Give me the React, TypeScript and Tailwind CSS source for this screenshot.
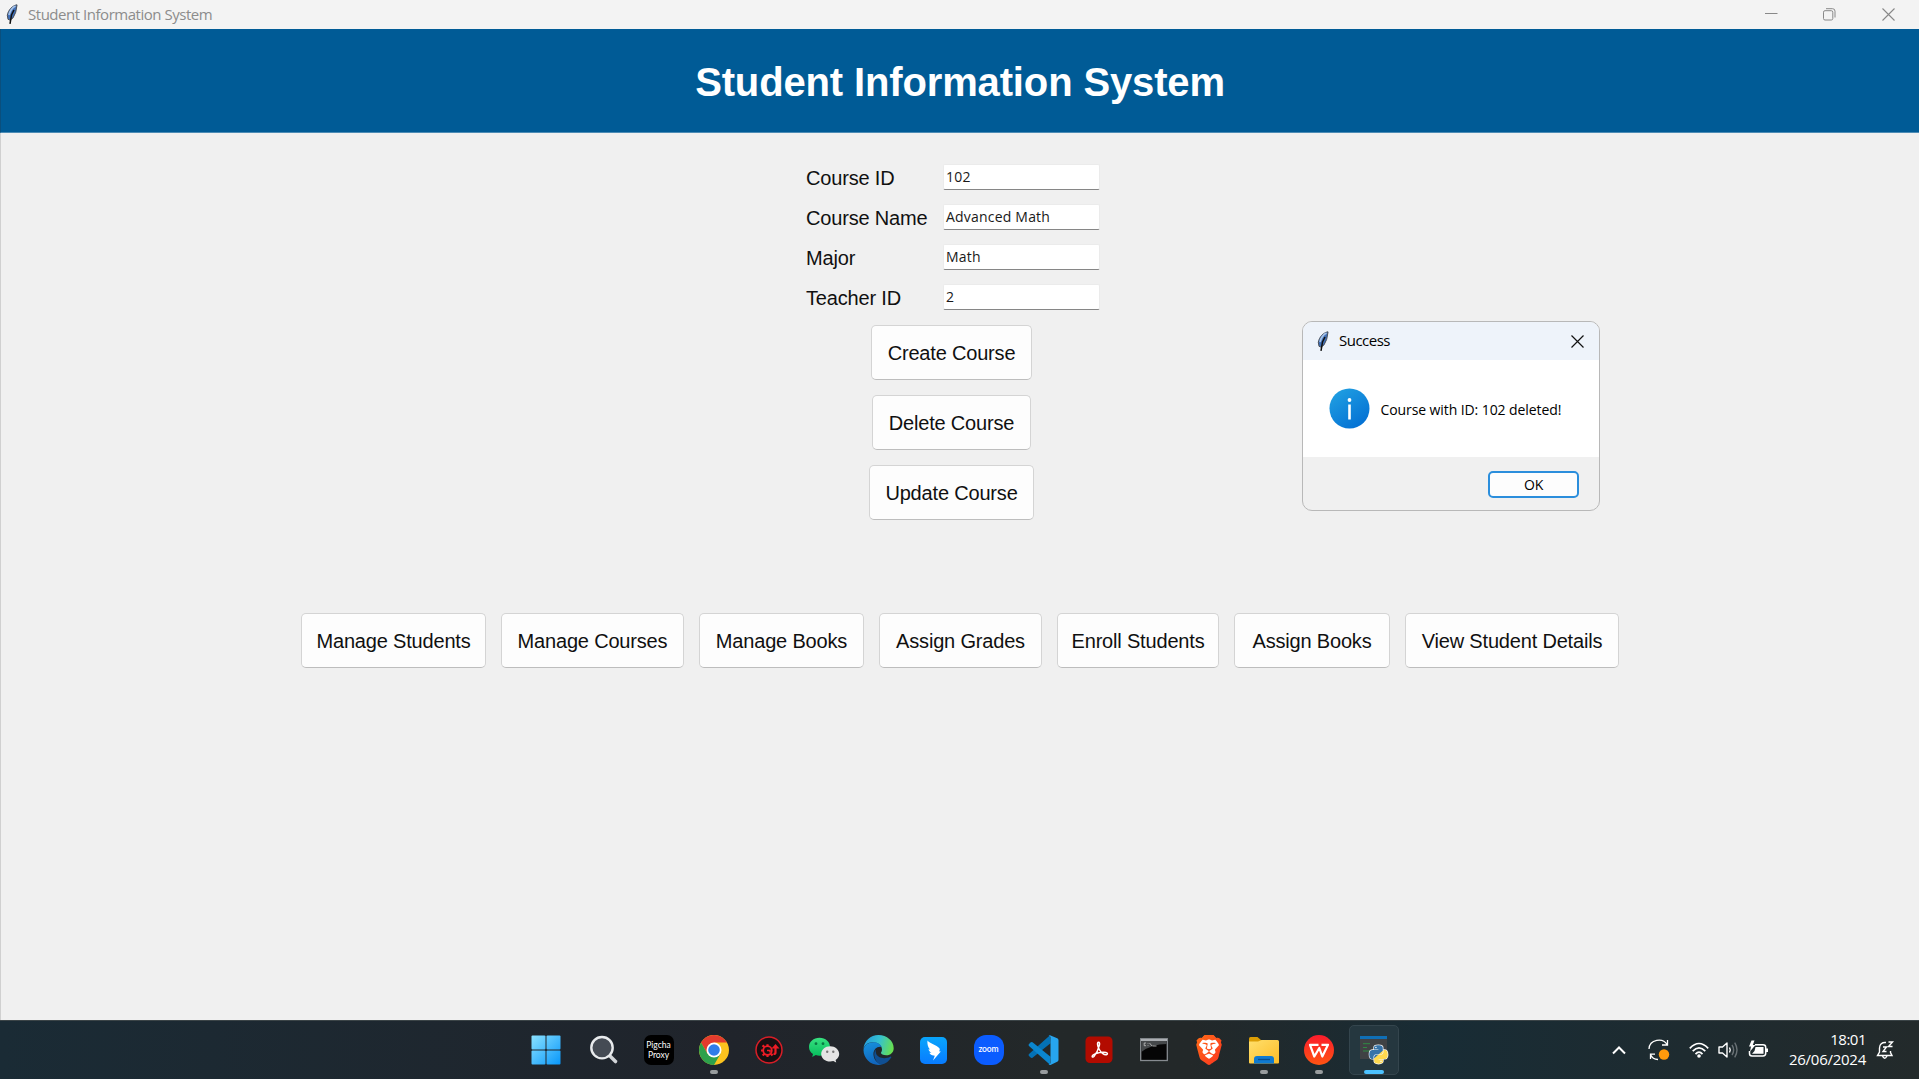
import React from "react";
import { SiBrave } from "react-icons/si";
import { FaPython } from "react-icons/fa";

const segoe = "font-['Open_Sans','Noto_Sans',sans-serif]";
const arial = "font-['Liberation_Sans',Arial,sans-serif]";

function Feather() {
  return (
    <svg width="13" height="21" viewBox="0 0 13 21" className="block shrink-0">
      <path d="M11 .8C6.500 1.500 2.200 6 1.300 11.200L2 15.300l2 .8 3-2.200 2.700-5.600L11 1.200Z" fill="#3f6fb8" stroke="#4a4f57" strokeWidth="1" />
      <path d="M9.500 2C6.500 3.500 4 7 3 11" stroke="#a5c2e8" strokeWidth="1.800" fill="none" />
      <path d="M8 6 5.500 11 4 19.800" stroke="#111" strokeWidth="1.500" fill="none" />
    </svg>
  );
}

function TitleBar() {
  return (
    <div className={`flex h-[29px] shrink-0 items-center bg-[#f3f3f3] pl-[6px] pr-[1px] text-[#8c8c8c] ${segoe}`}>
      <Feather />
      <span className="mb-[2px] ml-[9px] text-[15px] leading-[20px] tracking-[-0.47px]">Student Information System</span>
      <div className="ml-auto flex items-center">
        <div className="flex w-[58px] justify-center">
          <svg width="13" height="13" viewBox="0 0 13 13"><path d="M0 5.500H12.500" stroke="#888" strokeWidth="1" /></svg>
        </div>
        <div className="flex w-[58px] justify-center">
          <svg width="13" height="13" viewBox="0 0 13 13" fill="none" stroke="#888">
            <rect x=".5" y="2.700" width="9.300" height="9.300" rx="1.500" />
            <path d="M3 .7H9.500Q12 .7 12 3.200V9.500" />
          </svg>
        </div>
        <div className="flex w-[60px] justify-center">
          <svg width="13" height="13" viewBox="0 0 13 13"><path d="M.5 .5 12.500 12.500M12.500 .5.5 12.500" stroke="#888" strokeWidth="1.100" /></svg>
        </div>
      </div>
    </div>
  );
}

const fields = [
  ["Course ID", "102"],
  ["Course Name", "Advanced Math"],
  ["Major", "Math"],
  ["Teacher ID", "2"],
];

function Button({ label, width }: { label: string; width: string }) {
  return (
    <button className={`${width} h-[55px] shrink-0 whitespace-nowrap rounded-[5px] border border-[#d4d4d4] border-b-[#bdbdbd] bg-[#fdfdfd] text-[20px] leading-[24px] tracking-[-0.18px] text-[#101010] ${arial}`}>
      {label}
    </button>
  );
}

function Dialog() {
  return (
    <div className={`absolute left-[1302px] top-[321px] flex h-[190px] w-[298px] flex-col overflow-hidden rounded-[10px] border border-[#b8b8b8] bg-[#f0f0f0] text-black ${segoe}`}>
      <div className="flex h-[38px] shrink-0 items-center bg-[#eef3fa] pl-[14px] pr-[15px]">
        <Feather />
        <span className="mb-[2px] ml-[9px] text-[15px] leading-[20px] tracking-[-0.5px]">Success</span>
        <svg className="ml-auto" width="13" height="13" viewBox="0 0 13 13"><path d="M.5 .5 12.500 12.500M12.500 .5.5 12.500" stroke="#111" strokeWidth="1.200" /></svg>
      </div>
      <div className="flex h-[97px] shrink-0 items-center bg-white pl-[25.500px]">
        <svg width="41" height="41" viewBox="0 0 41 41" className="shrink-0">
          <defs>
            <linearGradient id="info" x1="0" y1="0" x2=".7" y2="1"><stop stopColor="#23a4e3" /><stop offset="1" stopColor="#0471d4" /></linearGradient>
          </defs>
          <circle cx="20.500" cy="20.500" r="20" fill="url(#info)" />
          <circle cx="20.500" cy="12" r="1.900" fill="#fff" />
          <path d="M20.500 16.500V31.500" stroke="#fff" strokeWidth="2.600" />
        </svg>
        <span className="ml-[11px] mt-[2px] whitespace-nowrap text-[14px] leading-[20px] tracking-[-0.09px]">Course with ID: 102 deleted!</span>
      </div>
      <div className="flex flex-1 items-center justify-end pr-[20px] pt-[2px]">
        <button className="h-[27px] w-[91px] rounded-[5px] border-2 border-[#2b8edc] bg-[#fdfdfd] text-[14px] leading-[20px] tracking-[-0.3px]">OK</button>
      </div>
    </div>
  );
}

function WindowsIcon() {
  return (
    <svg width="30" height="30" viewBox="0 0 30 30">
      <defs>
        <linearGradient id="win" x1="0" y1="0" x2="29" y2="29" gradientUnits="userSpaceOnUse"><stop stopColor="#8de3ff" /><stop offset="1" stopColor="#0a98fa" /></linearGradient>
      </defs>
      <g fill="url(#win)">
        <rect x=".5" y=".5" width="14" height="14" rx="1" /><rect x="15.500" y=".5" width="14" height="14" rx="1" />
        <rect x=".5" y="15.500" width="14" height="14" rx="1" /><rect x="15.500" y="15.500" width="14" height="14" rx="1" />
      </g>
    </svg>
  );
}

function SearchIcon() {
  return (
    <svg width="30" height="30" viewBox="0 0 30 30">
      <path d="M20 20 26.500 26.500" stroke="#d3d6d9" strokeWidth="3.600" strokeLinecap="round" />
      <circle cx="13" cy="12.700" r="10.700" fill="#454b54" stroke="#e9ebed" strokeWidth="2.400" />
    </svg>
  );
}

function PigchaIcon() {
  return (
    <div className="flex h-[30px] w-[30px] flex-col items-center justify-center rounded-[7px] bg-black font-['Lato','Open_Sans',sans-serif] text-[8.500px] leading-[10px] text-white">
      <span>Pigcha</span>
      <span>Proxy</span>
    </div>
  );
}

function ChromeIcon() {
  return (
    <svg width="30" height="30" viewBox="0 0 30 30">
      <circle cx="15" cy="15" r="15" fill="#fcc31e" />
      <path d="M15 7.500H27.990A15 15 0 0 0 2.010 7.500L8.500 18.750Z" fill="#e33b2e" />
      <path d="M2.010 7.500A15 15 0 0 0 15 30L21.500 18.750 15 15 8.500 18.750Z" fill="#2da14c" />
      <circle cx="15" cy="15" r="7.500" fill="#fff" />
      <circle cx="15" cy="15" r="5.800" fill="#2f7de9" />
    </svg>
  );
}

function GearIcon() {
  return (
    <svg width="30" height="30" viewBox="0 0 30 30" fill="none">
      <circle cx="15" cy="15" r="13" fill="#171012" stroke="#d81e27" strokeWidth="1.500" />
      <circle cx="13.500" cy="15.500" r="4.300" stroke="#ee1c25" strokeWidth="1.800" />
      <g stroke="#ee1c25" strokeWidth="2.200">
        <path d="M10.500 12 8.500 10.300M9 15.500H7M10.500 18.700 8.700 20.500M13.500 19.500V22M17 18.700 18.500 20.500M13.500 11.500V9.300" />
        <path d="M21.500 12.500V17.500Q21.500 19 19.500 19" />
      </g>
      <path d="M13 15.500H16V17.500" stroke="#ee1c25" strokeWidth="1.500" />
      <path d="M17.500 13.500 21.500 9 25.500 13.500Z" fill="#ee1c25" />
    </svg>
  );
}

function WeChatIcon() {
  return (
    <svg width="32" height="30" viewBox="0 0 32 30">
      <defs><linearGradient id="wc" x1="0" y1="0" x2="0" y2="1"><stop stopColor="#38e080" /><stop offset="1" stopColor="#05bd5c" /></linearGradient></defs>
      <path d="M11.500 2.800C5.500 2.800 1 6.800 1 11.900c0 3 1.500 5.400 4 7L4.200 22l3.600-1.900c1.200.4 2.400.6 3.700.6C17.500 20.700 22 16.800 22 11.900S17.500 2.800 11.500 2.800Z" fill="url(#wc)" />
      <circle cx="8" cy="8.700" r="1.400" fill="#087a43" /><circle cx="15" cy="8.700" r="1.400" fill="#087a43" />
      <path d="M22.200 11.300c-5 0-9 3.400-9 7.700s4 7.600 9 7.600c1.100 0 2.100-.2 3.100-.5l2.900 1.500-.6-2.700c2.300-1.400 3.600-3.500 3.600-5.900 0-4.300-4-7.700-9-7.700Z" fill="#e4e4e4" />
      <circle cx="19.200" cy="16.700" r="1.200" fill="#777" /><circle cx="25.300" cy="16.700" r="1.200" fill="#777" />
    </svg>
  );
}

function EdgeIcon() {
  return (
    <svg width="31" height="30" viewBox="0 0 31 30">
      <defs>
        <linearGradient id="eg" x1="0" y1=".3" x2="1" y2=".5"><stop stopColor="#249bdc" /><stop offset=".5" stopColor="#35c1d0" /><stop offset="1" stopColor="#68e04e" /></linearGradient>
        <linearGradient id="eb" x1="0" y1="0" x2=".3" y2="1"><stop stopColor="#1693df" /><stop offset="1" stopColor="#1166bd" /></linearGradient>
      </defs>
      <path d="M.5 14C1 6 7.500 0 15.500 0 24 0 30.700 6 30.700 13.200c0 4.300-3.200 7-7.300 7-3.400 0-5.400-1.200-5.400-2.300 0-.9 1-1.400 1-3.500C19 10 14.500 7.200 10 7.200 5 7.200 1.500 10 .5 14Z" fill="url(#eg)" />
      <path d="M.5 15C1 10 5.500 7.200 10 7.200c4.200 0 7.500 2 8.700 4.800-5-1-8.700 3-8.200 8 .5 5 4 8.500 8.500 9.500C9.500 31.800.5 24.500.5 15Z" fill="url(#eb)" />
      <path d="M12.500 14.500C8.500 21.500 15 30.500 19 29.500c4-.9 7.300-3.700 9.200-7 .5-.8-.3-1.200-1-.8-5.800 3-12.500 1-14-3-.5-1.500-.6-3-.7-4.200Z" fill="#104f92" />
    </svg>
  );
}

function BirdIcon() {
  return (
    <svg width="27" height="27" viewBox="0 0 27 27">
      <defs><linearGradient id="bd" x1="0" y1="0" x2="0" y2="1"><stop stopColor="#09a5fb" /><stop offset="1" stopColor="#087bff" /></linearGradient></defs>
      <rect width="27" height="27" rx="5" fill="url(#bd)" />
      <path d="M7.500 3.500C9.500 6 14.500 7.500 18 10c1.700 1.200 2.500 2.300 1 4.200l1.800.3L13 23.500l1.800-4.700-2.600-.6c-1.500-.4-2.300-1.200-2.800-2.400l2 .2c-1.500-.9-2.400-2.100-2.900-3.700l1.500.3C8 10.300 7 7 7.500 3.500Z" fill="#fff" />
    </svg>
  );
}

function ZoomIcon() {
  return (
    <div className="flex h-[30px] w-[30px] items-center justify-center rounded-[12px] bg-[#0b5cff] pb-[2px] font-['Lato',sans-serif] text-[8.500px] font-semibold leading-[10px] tracking-[-0.1px] text-white">
      zoom
    </div>
  );
}

function CodeIcon() {
  return (
    <svg width="31" height="30" viewBox="0 0 31 30">
      <path d="M22.500 8.300 4.500 22.700Q3.500 23.400 2.600 22.600L1 21Q0 20 1 19L22 .2Z" fill="#0471b5" />
      <path d="M22.500 21.700 4.500 7.300Q3.500 6.600 2.600 7.400L1 9Q0 10 1 11L22 29.800Z" fill="#0b86cf" />
      <path d="M22 .2 29.200 3.200Q30.500 3.800 30.500 5.200V24.800Q30.500 26.200 29.200 26.800L22.500 30Q21.300 29.900 20.500 29 22.500 29.500 22.500 27.500V2.500Q22.500.5 20.500 1Z" fill="#27a5ef" />
    </svg>
  );
}

function AcrobatIcon() {
  return (
    <svg width="28" height="28" viewBox="0 0 28 28">
      <rect x=".5" y=".5" width="27" height="26.500" rx="4.500" fill="#b30b00" />
      <path d="M13.500 6.300c-1.700 0-.9 4.200.8 7.200 1.500 2.800 4.800 5.600 7 5.200 2.300-.7.900-2.900-3.500-2.500-3.800.3-8 1.300-9.800 2.800-1.700 1.500-.6 3 .9 1.400 1.700-2 4.500-7.200 5.400-10.800.5-2 .3-3.300-.8-3.300Z" fill="none" stroke="#fff" strokeWidth="1.500" />
    </svg>
  );
}

function TerminalIcon() {
  return (
    <svg width="28" height="24" viewBox="0 0 28 24">
      <rect x=".7" y=".7" width="26.600" height="21.800" fill="#050505" stroke="#868b90" strokeWidth="1.300" />
      <path d="M1.300 2.500H26.700V6Q12 6 1.300 14Z" fill="#45484a" />
      <path d="M1 2H27" stroke="#b9bdc1" strokeWidth="1.800" />
      <path d="M6 5H4.200V7.700H6M8 5.200V5.800M8 7V7.700M9.500 5 12 8M12.500 8H16.500" stroke="#c4c4c4" strokeWidth=".8" fill="none" />
    </svg>
  );
}

function BraveIcon() {
  return (
    <div className="relative flex h-[30px] w-[30px] items-center justify-center">
      <svg width="28" height="30" viewBox="0 0 28 30">
        <defs><linearGradient id="br" x1="0" y1="0" x2="1" y2="1"><stop stopColor="#ff6b16" /><stop offset="1" stopColor="#fb3421" /></linearGradient></defs>
        <path d="M9 1.300H19L21.500 4 24 4.300 25.500 6.200 24.500 8.500 25.300 10.500 21.500 22.500 19.500 24.800 14 28.500 8.500 24.800 6.500 22.500 2.700 10.500 3.500 8.500 2.500 6.200 4 4.300 6.500 4Z" fill="#fff" />
      </svg>
      <SiBrave className="absolute left-0 top-0" size={30} fill="url(#br)" />
    </div>
  );
}

function FolderIcon() {
  return (
    <svg width="30" height="30" viewBox="0 0 30 30">
      <defs><linearGradient id="fo" x1="0" y1="0" x2="1" y2="1"><stop stopColor="#ffdf6c" /><stop offset="1" stopColor="#fcbd28" /></linearGradient></defs>
      <path d="M0 3.500Q0 2 1.500 2H8.500L12.500 5.500V11H0Z" fill="#dc9e05" />
      <path d="M0 6.500H9L12.500 5H28.500Q30 5 30 6.500V27.500Q30 28.500 29 28.500H1Q0 28.500 0 27.500Z" fill="url(#fo)" />
      <path d="M5 28.500V24Q5 21 8 21H22Q25 21 25 24V28.500Z" fill="#0f7ad0" />
      <path d="M9 24.500H21" stroke="#074e8e" strokeWidth="1.300" />
    </svg>
  );
}

function WpsIcon() {
  return (
    <svg width="30" height="30" viewBox="0 0 30 30" fill="none">
      <defs><linearGradient id="wps" x1="0" y1="0" x2="0" y2="1"><stop stopColor="#fb1c2d" /><stop offset="1" stopColor="#ff5412" /></linearGradient></defs>
      <circle cx="15" cy="15" r="15" fill="url(#wps)" />
      <path d="M14.500 9.800H6L10.300 21.500 15.300 13 18.300 21.500 24 9.800H17.500" stroke="#fff" strokeWidth="2.200" strokeLinejoin="round" />
    </svg>
  );
}

function IdleIcon() {
  return (
    <div className="relative h-[30px] w-[30px]">
      <svg width="30" height="30" viewBox="0 0 30 30">
        <defs><linearGradient id="py" x1=".15" y1=".1" x2=".85" y2=".9"><stop offset=".48" stopColor="#3673a9" /><stop offset=".52" stopColor="#ffd94f" /></linearGradient></defs>
        <rect x="1" y="1" width="27" height="23" fill="#404244" />
        <rect x="1" y="1" width="27" height="3" fill="#0f6fb5" />
        <path d="M4 8.700H11M4 12.500H8M4 16H12" stroke="#2f8a43" strokeWidth="1" />
      </svg>
      <FaPython className="absolute left-[9px] top-[9px] overflow-visible" size={21} fill="url(#py)" stroke="#f4f4f4" strokeWidth={35} style={{ paintOrder: "stroke" }} />
    </div>
  );
}

const apps: { icon: React.ReactNode; mark?: "running" | "active" }[] = [
  { icon: <PigchaIcon /> },
  { icon: <ChromeIcon />, mark: "running" },
  { icon: <GearIcon /> },
  { icon: <WeChatIcon /> },
  { icon: <EdgeIcon /> },
  { icon: <BirdIcon /> },
  { icon: <ZoomIcon /> },
  { icon: <CodeIcon />, mark: "running" },
  { icon: <AcrobatIcon /> },
  { icon: <TerminalIcon /> },
  { icon: <BraveIcon /> },
  { icon: <FolderIcon />, mark: "running" },
  { icon: <WpsIcon />, mark: "running" },
  { icon: <IdleIcon />, mark: "active" },
];

function Taskbar() {
  return (
    <div className={`flex h-[59px] shrink-0 items-center border-t border-[#3b4447] bg-linear-to-r from-[#1a2b35] from-0% via-[#20242b] via-38% to-[#232829] to-55% text-white ${segoe}`}>
      <div className="flex h-full flex-1 items-center bg-linear-to-r from-transparent from-62% via-[#182c35] via-75% to-[#232a2b] to-100%">
        <div className="ml-[518.500px] flex w-[55px] justify-center"><WindowsIcon /></div>
        <div className="ml-[2.500px] flex w-[55px] justify-center"><SearchIcon /></div>
        {apps.map((app, i) => (
          <div key={i} className="flex h-full w-[55px] items-center justify-center">
            <div className={app.mark === "active" ? "relative flex h-[50px] w-[50px] items-center justify-center rounded-[5px] border border-[#34454d] bg-[#25373f]" : "relative flex h-[50px] w-[50px] items-center justify-center"}>
              {app.icon}
              {app.mark === "running" && <div className="absolute bottom-[1px] left-[21px] h-[4px] w-[8px] rounded-full bg-[#989c9e]" />}
              {app.mark === "active" && <div className="absolute bottom-0 left-[14px] h-[4px] w-[20px] rounded-full bg-[#4cc2ff]" />}
            </div>
          </div>
        ))}
        <div className="ml-auto flex items-center">
          <svg width="16" height="12" viewBox="0 0 16 12" fill="none"><path d="M2 9.500 8 3.500 14 9.500" stroke="#fff" strokeWidth="2" /></svg>
          <svg className="ml-[21px]" width="22" height="22" viewBox="0 0 22 22" fill="none">
            <path d="M1 10C1.500 0 15 -1.500 19 5.500M19.500 1V6H14M10 20.500C6.500 20.500 3.500 18 2.500 15.500M2.500 20V15.200H7" stroke="#fff" strokeWidth="1.300" />
            <circle cx="16" cy="15.500" r="5.200" fill="#ff9a0c" />
          </svg>
          <svg className="ml-[19px]" width="20" height="17" viewBox="0 0 20 17" fill="none" stroke="#fff" strokeWidth="1.700">
            <path d="M.8 6.300Q10-3.300 19.200 6.300M3.700 9.200Q10 2.500 16.300 9.200M6.500 12.100Q10 8.200 13.500 12.100" />
            <circle cx="10" cy="14" r="1.800" fill="#fff" stroke="none" />
          </svg>
          <svg className="ml-[9px]" width="20" height="18" viewBox="0 0 20 18" fill="none" strokeLinejoin="round">
            <path d="M1 6H4.500L9 2V16L4.500 12H1Z" stroke="#fff" strokeWidth="1.400" />
            <path d="M11.500 6.500Q13 9 11.500 11.500" stroke="#fff" strokeWidth="1.400" />
            <path d="M14 4Q17.300 9 14 14M16.700 1.700Q21.300 9 16.700 16.300" stroke="#697175" strokeWidth="1.400" />
          </svg>
          <svg className="mb-[2px] ml-[10px]" width="21" height="18" viewBox="0 0 21 18" fill="none">
            <path d="M7 4.700H15Q17.700 4.700 17.700 7.200V13.300Q17.700 16 15 16H4Q1.500 16 1.500 13.500V11" stroke="#fff" strokeWidth="1.500" />
            <path d="M7.500 7H15.500V13.700H4L6.500 11Z" fill="#fff" />
            <path d="M18 8.500H20V12H18Z" fill="#fff" />
            <path d="M3.500.5 1 6.500H3L2 11.500 7.500 5H4.800L6.500.5Z" fill="#fff" />
          </svg>
          <div className="mb-[3px] ml-[17px] flex w-[80px] flex-col items-end whitespace-nowrap text-[15px] leading-[20px]">
            <span className="tracking-[-0.5px]">18:01</span>
            <span className="tracking-[-0.26px]">26/06/2024</span>
          </div>
          <svg className="ml-[10px] mr-[24px]" width="19" height="19" viewBox="0 0 19 19" fill="none" stroke="#fff" strokeWidth="1.400">
            <path d="M10 1.500C6 1 3.500 3.500 3.500 7V11L1.500 14.500H16L14.500 11.500V10M6.500 15Q8.500 19.500 11 15" />
            <path d="M7 6H10.500L7 10.500H10.500M12.500 1H16.500L12.500 5.500H16.500" />
          </svg>
        </div>
      </div>
    </div>
  );
}

export default function App() {
  return (
    <div className="relative flex h-[1079px] w-[1919px] flex-col overflow-hidden bg-[#f0f0f0]">
      <TitleBar />
      <header className="flex h-[104px] shrink-0 items-center justify-center border-b border-l border-b-[#4d8cb5] border-l-[#0a4f7d] bg-[#005b96] pt-[2px]">
        <h1 className={`whitespace-nowrap text-[40px] font-bold leading-[46px] tracking-[-0.14px] text-white ${arial}`}>Student Information System</h1>
      </header>
      <main className="flex flex-1 flex-col border-l border-[#d0d0d0] pt-[31px]">
        <div className="ml-[805px] flex w-[294px] flex-col">
          <div className="grid w-full grid-cols-[137px_157px] gap-y-[14px]">
            {fields.map(([label, value]) => (
              <React.Fragment key={label}>
                <label className={`flex h-[26px] items-center whitespace-nowrap pt-[2px] text-[20px] leading-[24px] tracking-[-0.18px] text-[#101010] ${arial}`}>{label}</label>
                <div className={`flex h-[26px] items-center rounded-[2px] border border-[#ebebeb] border-b-[#868686] bg-white pl-[2px] text-[14px] leading-[20px] tracking-[0.2px] text-[#191919] ${segoe}`}>{value}</div>
              </React.Fragment>
            ))}
          </div>
          <div className="mt-[15px] flex w-[291px] flex-col items-center gap-[15px]">
            <Button label="Create Course" width="w-[161px]" />
            <Button label="Delete Course" width="w-[159px]" />
            <Button label="Update Course" width="w-[165px]" />
          </div>
        </div>
        <nav className="ml-[300px] mt-[93px] flex gap-[15px]">
          <Button label="Manage Students" width="w-[185px]" />
          <Button label="Manage Courses" width="w-[183px]" />
          <Button label="Manage Books" width="w-[165px]" />
          <Button label="Assign Grades" width="w-[163px]" />
          <Button label="Enroll Students" width="w-[162px]" />
          <Button label="Assign Books" width="w-[156px]" />
          <Button label="View Student Details" width="w-[214px]" />
        </nav>
      </main>
      <Taskbar />
      <Dialog />
    </div>
  );
}
